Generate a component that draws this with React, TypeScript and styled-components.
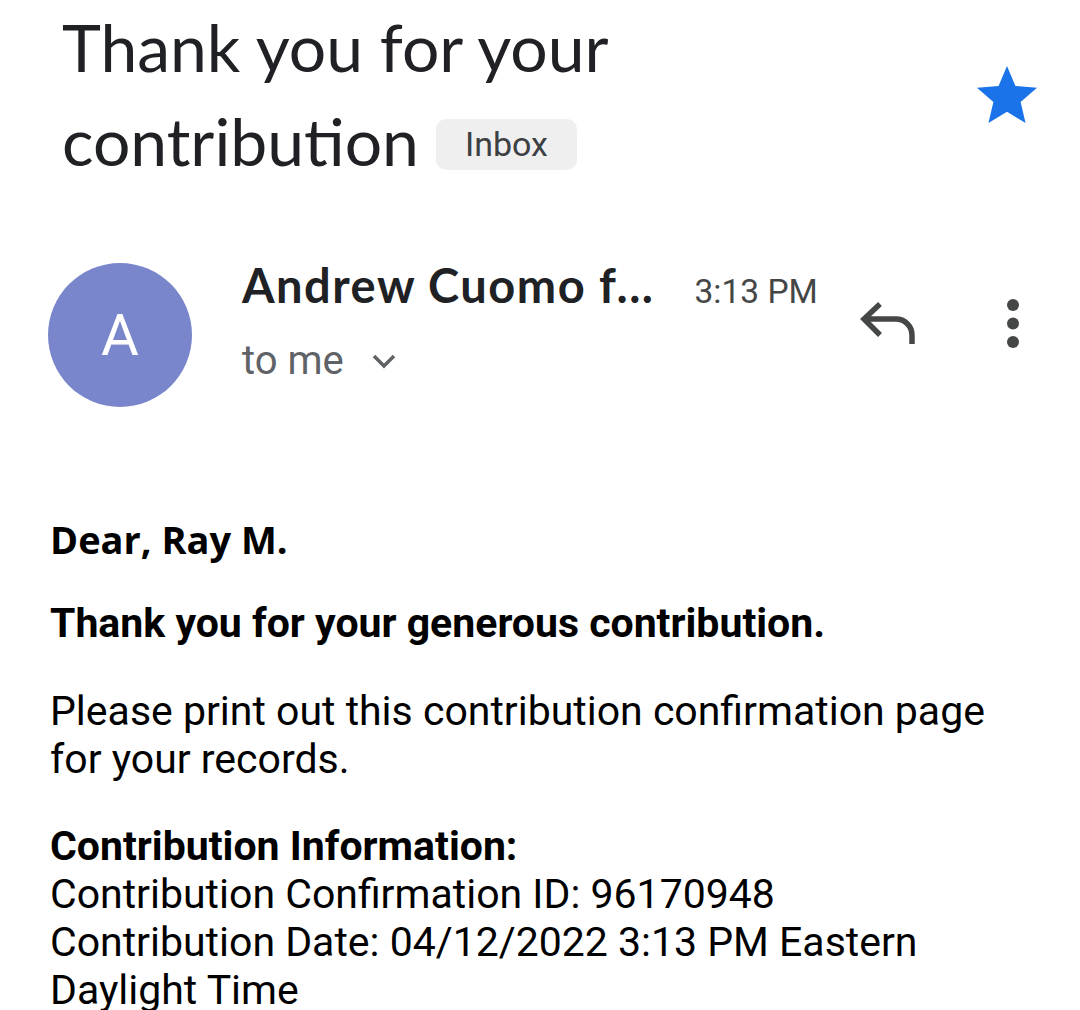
import React from "react";
import styled, { createGlobalStyle } from "styled-components";

const GlobalStyle = createGlobalStyle`
  html, body {
    margin: 0;
    padding: 0;
    background: #ffffff;
  }
  body {
    font-family: Roboto, "Liberation Sans", sans-serif;
    -webkit-font-smoothing: antialiased;
  }
`;

const contributionLines = [
  "Contribution Confirmation ID: 96170948",
  "Contribution Date: 04/12/2022 3:13 PM Eastern Daylight Time",
];

const Page = styled.div`
  width: 1080px;
  min-height: 1010px;
  background: #fff;
  overflow: hidden;
`;

const Header = styled.header`
  display: flex;
  justify-content: space-between;
  align-items: flex-start;
  padding: 0 37px 0 62px;
`;

const Subject = styled.h1`
  margin: 0;
  max-width: 640px;
  font-family: Lato, "Open Sans", sans-serif;
  font-weight: 400;
  font-size: 66px;
  line-height: 94px;
  color: #202124;
`;

const SubjectText = styled.span`
  display: inline;
`;

const Label = styled.span`
  display: inline-block;
  margin-left: 17px;
  padding: 0 29px;
  height: 51px;
  line-height: 51px;
  border-radius: 10px;
  background: #efefef;
  font-family: Roboto, sans-serif;
  font-size: 34px;
  color: #3c4043;
  vertical-align: 10px;
`;

const StarButton = styled.svg`
  flex: none;
  margin-top: 60px;
  width: 72px;
  height: 72px;
`;

const SenderRow = styled.section`
  display: flex;
  align-items: flex-start;
  margin-top: 69px;
  padding: 0 59px 0 48px;
`;

const Avatar = styled.div`
  flex: none;
  width: 144px;
  height: 144px;
  margin-top: 6px;
  border-radius: 50%;
  background: #7986cb;
  color: #fff;
  display: flex;
  align-items: center;
  justify-content: center;
  font-family: Roboto, sans-serif;
  font-size: 58px;
  font-weight: 400;
`;

const SenderInfo = styled.div`
  margin-left: 50px;
  display: flex;
  flex-direction: column;
`;

const NameLine = styled.div`
  display: flex;
  align-items: baseline;
  height: 56px;
  line-height: 56px;
`;

const SenderName = styled.span`
  font-family: Lato, "Open Sans", sans-serif;
  font-weight: 700;
  font-size: 47px;
  letter-spacing: 1.5px;
  color: #202124;
`;

const Time = styled.span`
  margin-left: 40px;
  font-family: Roboto, sans-serif;
  font-size: 33.5px;
  color: #444746;
`;

const Recipient = styled.div`
  margin-top: 19px;
  display: flex;
  align-items: center;
  height: 56px;
  font-family: Roboto, sans-serif;
  font-size: 40px;
  color: #5f6368;
`;

const Chevron = styled.svg`
  margin-left: 27px;
  margin-top: 2px;
  width: 26px;
  height: 16px;
`;

const Actions = styled.div`
  margin-left: auto;
  margin-top: 37px;
  display: flex;
  align-items: flex-start;
  gap: 87px;
`;

const IconSvg = styled.svg<{ $w: number; $h: number; $top?: number }>`
  display: block;
  width: ${(p) => p.$w}px;
  height: ${(p) => p.$h}px;
  margin-top: ${(p) => p.$top ?? 0}px;
`;

const Body = styled.article`
  margin-top: 108px;
  padding: 0 55px 0 50px;
  color: #000;
  font-family: Roboto, sans-serif;
  font-size: 41px;
  line-height: 48px;
`;

const Greeting = styled.p`
  margin: 0;
  font-family: "Open Sans", sans-serif;
  font-weight: 700;
  font-size: 38px;
`;

const Para = styled.p<{ $bold?: boolean; $gap?: number }>`
  margin: ${(p) => p.$gap ?? 40}px 0 0;
  font-weight: ${(p) => (p.$bold ? 700 : 400)};
`;

const Strong = styled.span`
  display: block;
  font-weight: 700;
`;

const Line = styled.span`
  display: block;
`;

export default function App() {
  return (
    <Page>
      <GlobalStyle />
      <Header>
        <Subject>
          <SubjectText>Thank you for your contribution</SubjectText>
          <Label>Inbox</Label>
        </Subject>
        <StarButton viewBox="0 0 24 24">
          <path
            fill="#1a73e8"
            d="M12 17.27L18.18 21l-1.64-7.03L22 9.24l-7.19-.61L12 2 9.19 8.63 2 9.24l5.46 4.73L5.82 21z"
          />
        </StarButton>
      </Header>

      <SenderRow>
        <Avatar>A</Avatar>
        <SenderInfo>
          <NameLine>
            <SenderName>Andrew Cuomo f...</SenderName>
            <Time>3:13 PM</Time>
          </NameLine>
          <Recipient>
            to me
            <Chevron viewBox="0 0 26 16">
              <polyline points="3,3 13,13 23,3" fill="none" stroke="#5f6368" strokeWidth="3.5" />
            </Chevron>
          </Recipient>
        </SenderInfo>
        <Actions>
          <IconSvg $w={60} $h={60} viewBox="0 0 60 60">
            <path
              d="M22 10 L6 25 L22 41 M6 25 H38 A16 16 0 0 1 54 41 V50"
              fill="none"
              stroke="#444746"
              strokeWidth="5.5"
            />
          </IconSvg>
          <IconSvg $w={16} $h={54} $top={3} viewBox="0 0 16 54">
            <circle cx="8" cy="8" r="6" fill="#444746" />
            <circle cx="8" cy="26.5" r="6" fill="#444746" />
            <circle cx="8" cy="45" r="6" fill="#444746" />
          </IconSvg>
        </Actions>
      </SenderRow>

      <Body>
        <Greeting>Dear, Ray M.</Greeting>
        <Para $bold $gap={36}>Thank you for your generous contribution.</Para>
        <Para>Please print out this contribution confirmation page for your records.</Para>
        <Para $gap={39}>
          <Strong>Contribution Information:</Strong>
          {contributionLines.map((l) => (
            <Line key={l}>{l}</Line>
          ))}
        </Para>
      </Body>
    </Page>
  );
}
